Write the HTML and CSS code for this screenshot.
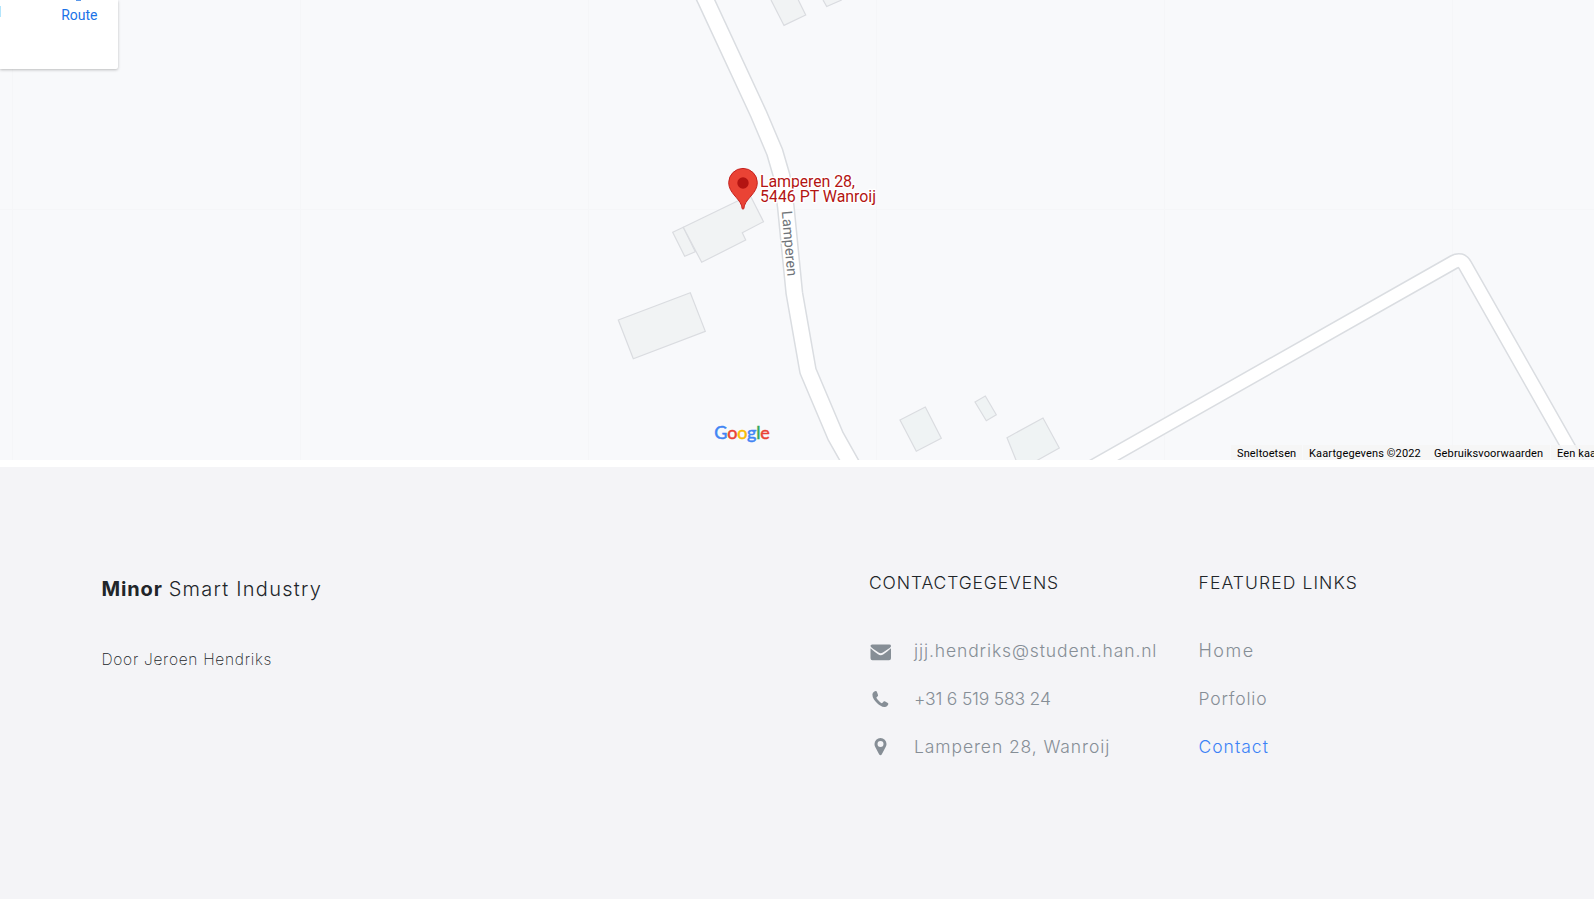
FILE: index.html
```html
<!DOCTYPE html>
<html lang="nl">
<head>
<meta charset="utf-8">
<title>Contact - Minor Smart Industry</title>
<link rel="stylesheet" href="styles.css">
</head>
<body>
<section class="map">
  <svg class="map-canvas" width="1594" height="460" viewBox="0 0 1594 460">
    <path class="tile-lines" d="M12.5 0V460M300.5 0V460M588.5 0V460M876.5 0V460M1164.5 0V460M1452.5 0V460M0 209.5H1594"/>
    <g class="building">
      <path d="M771 0L784 25.4L805.7 15L798.3 0M823 0L826.7 6.6L841.7 0"/>
      <path d="M672.7 232.3L683.3 227.3L695.3 251.7L684.7 256.3Z"/>
      <path d="M683.3 227.3L750 195L763.5 221.7L742.3 232.7L745.7 240L701.7 262.3Z"/>
      <path d="M618.3 320L690.3 292.7L705.3 331.3L633.3 358.7Z"/>
    </g>
    <g class="building building-alt">
      <path d="M900 420L925.3 407L941.3 438.3L916.3 451.3Z"/>
      <path d="M975 402L985.3 396L996.3 414.7L986.3 420.7Z"/>
      <path d="M1007 437.7L1043 418L1059.3 448L1020 470Z"/>
    </g>
    <path class="road-edge" d="M696 -20L705.7 0L758.3 113.3L774.7 152L781.7 176L785.8 207L794.3 293L808 371L835.5 436L862 483"/>
    <path class="road" d="M696 -20L705.7 0L758.3 113.3L774.7 152L781.7 176L785.8 207L794.3 293L808 371L835.5 436L862 483"/>
    <path class="road-edge minor" d="M1070 479.6L1454 262Q1461 258 1465 265L1587 480"/>
    <path class="road minor" d="M1070 479.6L1454 262Q1461 258 1465 265L1587 480"/>
    <text class="street" transform="translate(781.7 211.3) rotate(85)" textLength="65.5">Lamperen</text>
    <path class="pin" d="M743 209.3C742 209.3 742 207.5 741.4 205.2C738.9 198 728.7 192.6 728.7 182.7A14.3 14.3 0 0 1 757.3 182.7C757.3 192.6 747.1 198 744.6 205.2C744 207.5 744 209.3 743 209.3Z"/>
    <circle class="pin-dot" cx="743" cy="183" r="5.7"/>
    <g class="place">
      <text x="760" y="186.700" textLength="95">Lamperen 28,</text>
      <text x="760" y="202.200" textLength="116">5446 PT Wanroij</text>
    </g>
    <text class="google" x="714.300" y="438.500" textLength="55.500"><tspan class="g-blue">G</tspan><tspan class="g-red">o</tspan><tspan class="g-yellow">o</tspan><tspan class="g-blue">g</tspan><tspan class="g-green">l</tspan><tspan class="g-red">e</tspan></text>
  </svg>
  <div class="place-card">
    <span class="route-icon"></span>
    <a class="route">Route</a>
  </div>
  <div class="credits">
    <span class="credit c1">Sneltoetsen</span>
    <span class="credit c2">Kaartgegevens ©2022</span>
    <span class="credit c3">Gebruiksvoorwaarden</span>
    <span class="credit c4">Een kaartfout</span>
  </div>
</section>
<footer class="footer">
  <div class="about">
    <h2 class="brand"><b class="brand-bold">Minor</b><span class="brand-light">Smart Industry</span></h2>
    <p class="author">Door Jeroen Hendriks</p>
  </div>
  <div class="contact">
    <h3 class="heading h-contact">CONTACTGEGEVENS</h3>
    <ul class="list">
      <li class="row"><svg class="icon" width="22" height="22" viewBox="0 0 22 22"><path d="M.5 7.300V17.200Q.5 19.200 2.500 19.200H19Q21 19.200 21 17.200V7.300C19 9.300 15.500 11.700 13.500 13.200Q10.700 15.300 8 13.200C6 11.700 2.500 9.300 .5 7.300ZM2.300 3.500Q.2 3.500 .5 5.100C.8 6.100 2 7 3 7.700L8.600 11.600Q10.700 13 12.900 11.600L18.500 7.700C19.700 6.900 21 5.900 21 4.900Q21 3.500 19.200 3.500Z"/></svg><span class="t-mail">jjj.hendriks@student.han.nl</span></li>
      <li class="row"><svg class="icon" width="22" height="22" viewBox="0 0 22 22"><path d="M6.300 2.100C5.200 1.700 2.500 3.200 2.400 5.600C2.300 9.100 4.700 12 7.200 14.300C9.700 16.600 12.300 18.300 15.100 17.900C17.300 17.700 18.500 15.600 18.300 14.500C18.200 14.100 14.800 12.300 14.200 12.300C13.400 12.300 12.700 14.200 11.900 14.200C10.600 13.800 6.700 10 6.400 8.700C6.300 7.900 8.100 7.200 8.100 6.400C8.100 5.800 6.700 2.400 6.300 2.100Z"/></svg><span class="t-phone">+31 6 519 583 24</span></li>
      <li class="row"><svg class="icon" width="22" height="22" viewBox="0 0 22 22"><path fill-rule="evenodd" d="M10.500 1A6 6 0 0 0 4.500 7C4.500 8 4.600 8.700 5 9.500L9.200 17.600Q10.500 19.100 11.700 17.600L15.900 9.500C16.300 8.700 16.500 8 16.500 7A6 6 0 0 0 10.500 1ZM10.500 4A3 3 0 1 1 10.500 10A3 3 0 0 1 10.500 4Z"/></svg><span class="t-address">Lamperen 28, Wanroij</span></li>
    </ul>
  </div>
  <div class="links">
    <h3 class="heading h-links">FEATURED LINKS</h3>
    <ul class="list">
      <li class="row"><a class="t-home">Home</a></li>
      <li class="row"><a class="t-portfolio">Porfolio</a></li>
      <li class="row"><a class="t-contact active">Contact</a></li>
    </ul>
  </div>
</footer>
</body>
</html>
```
FILE: styles.css
```css
* { box-sizing: border-box; }
body { margin: 0; background: #fff; font-family: Inter, sans-serif; overflow: hidden; }
h2, h3, p, ul { margin: 0; padding: 0; font-weight: 300; list-style: none; }

.map { position: relative; height: 460px; margin-bottom: 7px; overflow: hidden; background: #f8f9fb; font-family: Roboto, sans-serif; }
.map-canvas { display: block; }
.tile-lines { fill: none; stroke: #f5f6f8; stroke-width: 1; }
.building { fill: #f1f3f4; stroke: #dadce0; stroke-width: 1.2; }
.building-alt { fill: #eff3f4; }
.road-edge { fill: none; stroke: #dadde1; stroke-width: 18; stroke-linejoin: round; }
.road { fill: none; stroke: #fff; stroke-width: 15; stroke-linejoin: round; }
.road-edge.minor { stroke-width: 15.300; }
.road.minor { stroke-width: 12.300; }
.street { font-size: 14.500px; fill: #70757a; stroke: #fff; stroke-width: 2px; paint-order: stroke; }
.pin { fill: #ea4335; stroke: #c5221f; stroke-width: 1; }
.pin-dot { fill: #b31412; }
.place { font-size: 16px; fill: #b31412; stroke: #fff; stroke-width: 3px; paint-order: stroke; stroke-linejoin: round; }
.google { font-family: Lato, sans-serif; font-size: 18px; font-weight: 400; stroke-width: .5px; }
.g-blue { fill: #4285f4; stroke: #4285f4; }
.g-red { fill: #ea4335; stroke: #ea4335; }
.g-yellow { fill: #fbbc05; stroke: #fbbc05; }
.g-green { fill: #34a853; stroke: #34a853; }

.place-card { position: absolute; left: 0; top: 0; width: 118px; height: 69px; padding: 6px 20.500px 0 0; display: flex; justify-content: space-between; background: #fff; border-radius: 0 0 2px 0; box-shadow: 0 1px 3px rgba(0, 0, 0, .25); }
/* Descender of the label line scrolled above the viewport */
.place-card::after { content: ""; position: absolute; left: 76px; top: 0; width: 5px; height: 1px; background: #5b98ea; }
.route-icon { width: 1px; height: 11px; background: #b3e5fc; }
.route { font-size: 14px; line-height: 18px; color: #1a73e8; }
.credits { position: absolute; left: 1231px; bottom: 0; display: flex; height: 15px; font-size: 11px; line-height: 17px; letter-spacing: .130px; color: #000; white-space: nowrap; }
.credit { padding-left: 6px; background: rgba(245, 245, 245, .8); }
.c1 { width: 71px; margin-right: 1px; }
.c2 { width: 125px; }
.c3 { width: 122px; margin-right: 1px; }
.c4 { width: 90px; }

.footer { display: grid; grid-template-columns: 767.500px 329.500px 1fr; height: 432px; padding: 103px 0 0 101.500px; background: #f4f4f7; color: #212529; }
.brand { display: flex; gap: 6px; padding-top: 6px; font-size: 20px; line-height: 26px; white-space: nowrap; }
.brand-bold { font-weight: 700; letter-spacing: .850px; }
.brand-light { letter-spacing: 1.250px; }
.author { padding-top: 47px; font-size: 15.500px; line-height: 22px; font-weight: 200; letter-spacing: .720px; }
.heading { font-size: 17.500px; line-height: 26px; }
.h-contact { letter-spacing: .870px; }
.h-links { letter-spacing: 1.100px; }
.list { padding-top: 30px; }
.row { display: flex; align-items: center; height: 48px; font-size: 17.500px; font-weight: 300; color: #868e96; white-space: nowrap; }
.icon { margin: 4px 22px 0 1px; fill: #868e96; }
.t-mail { letter-spacing: .880px; }
.t-phone { letter-spacing: -.200px; }
.t-address { letter-spacing: .900px; }
.t-home { font-size: 18px; letter-spacing: 1.500px; }
.t-portfolio { letter-spacing: .820px; }
.t-contact { letter-spacing: 1px; }
.active { color: #3b82f6; }
```
